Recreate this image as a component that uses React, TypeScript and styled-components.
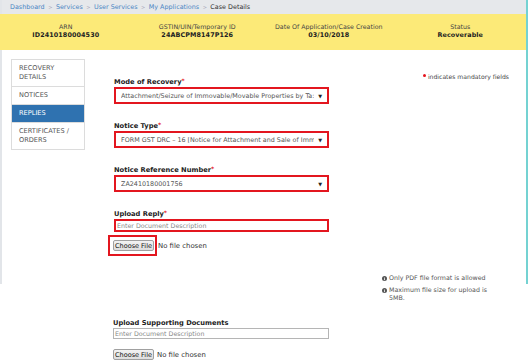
import React from "react";
import styled, { createGlobalStyle } from "styled-components";

const GlobalStyle = createGlobalStyle`
  html, body { margin: 0; padding: 0; background: #ffffff; }
  body { font-family: "DejaVu Sans", Verdana, sans-serif; color: #333; }
  * { box-sizing: border-box; }
`;

const Page = styled.div`
  width: 528px;
  height: 361px;
  overflow: hidden;
  background: #fff;
`;

const TopSection = styled.div`
  height: 284px;
  border-left: 2px solid #e2e5e9;
  border-right: 2px solid #74d2d2;
`;

const Breadcrumb = styled.nav`
  height: 14px;
  background: #e6e8eb;
  display: flex;
  align-items: center;
  padding-left: 8px;
  font-size: 6.4px;
  gap: 3.5px;
`;

const Crumb = styled.span<{ $current?: boolean }>`
  color: ${(p) => (p.$current ? "#333" : "#4a86c4")};
`;

const Sep = styled.span`
  color: #aab;
  font-size: 5px;
`;

const CaseHeader = styled.div`
  height: 36px;
  background: #fcea78;
  display: grid;
  grid-template-columns: repeat(4, 1fr);
  padding-top: 8px;
  margin-left: -2px;
`;

const HeaderCell = styled.div`
  display: flex;
  flex-direction: column;
  align-items: center;
  line-height: 9px;
`;

const HeaderLabel = styled.span`
  font-size: 6.3px;
  color: #444;
`;

const HeaderValue = styled.span`
  font-size: 6.4px;
  font-weight: bold;
  color: #222;
  letter-spacing: 0.1px;
`;

const Body = styled.div`
  display: grid;
  grid-template-columns: 74px 215px minmax(0, 1fr);
  column-gap: 29px;
  padding-left: 9px;
  align-items: start;
`;

const Sidebar = styled.ul`
  list-style: none;
  margin: 9px 0 0 0;
  padding: 0;
  border: 1px solid #dcdcdc;
`;

const SideItem = styled.li<{ $active?: boolean }>`
  padding: 4px 7px;
  font-size: 6.6px;
  line-height: 9px;
  text-transform: uppercase;
  color: ${(p) => (p.$active ? "#fff" : "#555")};
  background: ${(p) => (p.$active ? "#2f72b0" : "#fff")};
  border-top: 1px solid #dcdcdc;
  &:first-child { border-top: none; }
`;

const Form = styled.div`
  display: flex;
  flex-direction: column;
  padding-top: 27px;
  min-width: 0;
`;

const Field = styled.div`
  display: flex;
  flex-direction: column;
  margin-bottom: 17px;
`;

const Label = styled.label`
  font-size: 6.7px;
  font-weight: bold;
  color: #222;
  line-height: 10px;
  white-space: nowrap;
`;

const Req = styled.span`
  color: #e5141c;
  font-size: 6px;
  vertical-align: top;
  line-height: 8px;
`;

const SelectBox = styled.div<{ $invalid?: boolean }>`
  height: 17px;
  border: ${(p) => (p.$invalid ? "2px solid #e3161f" : "1px solid #aaa")};
  display: flex;
  align-items: center;
  justify-content: space-between;
  padding: 0 5px 0 5px;
  font-size: 6.4px;
  color: #555;
  white-space: nowrap;
  overflow: hidden;
`;

const SelectText = styled.span`
  overflow: hidden;
`;

const Arrow = styled.span`
  font-size: 5px;
  color: #222;
  margin-left: 4px;
`;

const TextInput = styled.div<{ $invalid?: boolean }>`
  height: ${(p) => (p.$invalid ? "13px" : "11px")};
  border: ${(p) => (p.$invalid ? "2px solid #e3161f" : "1px solid #b5b5b5")};
  display: flex;
  align-items: center;
  padding-left: 1px;
  font-size: 6.3px;
  color: #888;
`;

const FileRow = styled.div<{ $shift?: boolean }>`
  display: flex;
  align-items: center;
  font-size: 6.9px;
  color: #333;
  margin-top: ${(p) => (p.$shift ? "-14px" : "10px")};
  margin-left: ${(p) => (p.$shift ? "-6px" : "0")};
`;

const Highlight = styled.div`
  border: 2px solid #e3161f;
  padding: 3px 1px 3px 3px;
  display: flex;
`;

const FileButton = styled.span`
  display: inline-flex;
  align-items: center;
  justify-content: center;
  width: 41px;
  height: 11px;
  border: 1px solid #a0a0a0;
  border-radius: 2px;
  background: linear-gradient(#f3f3f3, #dddddd);
  font-size: 6.5px;
  color: #111;
`;

const NoFile = styled.span<{ $gap: number }>`
  margin-left: ${(p) => p.$gap}px;
`;

const Aside = styled.div`
  display: flex;
  flex-direction: column;
  min-width: 0;
`;

const Mandatory = styled.div`
  margin-top: 23px;
  margin-right: 17px;
  align-self: flex-end;
  font-size: 6.1px;
  color: #444;
  display: flex;
  align-items: center;
  gap: 2px;
  white-space: nowrap;
`;

const Dot = styled.span`
  width: 3px;
  height: 3px;
  border-radius: 50%;
  background: #e5141c;
  margin-top: -2px;
`;

const Notes = styled.div`
  margin-top: 194px;
  margin-left: 24px;
  width: 114px;
  display: flex;
  flex-direction: column;
  gap: 4px;
`;

const Note = styled.div`
  display: flex;
  align-items: flex-start;
  gap: 2px;
  font-size: 6.3px;
  line-height: 8px;
  color: #555;
`;

const InfoIcon = styled.svg`
  flex: none;
  width: 5px;
  height: 5px;
  margin-top: 1.5px;
`;

const BottomSection = styled.div`
  padding: 34px 0 0 113px;
  width: 329px;
  display: flex;
  flex-direction: column;
`;

const Info = () => (
  <InfoIcon viewBox="0 0 10 10">
    <circle cx="5" cy="5" r="5" fill="#555" />
    <rect x="4.2" y="4.2" width="1.6" height="4" fill="#fff" />
    <circle cx="5" cy="2.7" r="0.9" fill="#fff" />
  </InfoIcon>
);

const crumbs = ["Dashboard", "Services", "User Services", "My Applications"];

const header = [
  { label: "ARN", value: "ID2410180004530" },
  { label: "GSTIN/UIN/Temporary ID", value: "24ABCPM8147P126" },
  { label: "Date Of Application/Case Creation", value: "03/10/2018" },
  { label: "Status", value: "Recoverable" },
];

const sideItems = ["Recovery Details", "Notices", "Replies", "Certificates / Orders"];

const selects = [
  { label: "Mode of Recovery", value: "Attachment/Seizure of Immovable/Movable Properties by Ta:" },
  { label: "Notice Type", value: "FORM GST DRC – 16 [Notice for Attachment and Sale of Imm" },
  { label: "Notice Reference Number", value: "ZA2410180001756" },
];

export default function App() {
  return (
    <Page>
      <GlobalStyle />
      <TopSection>
        <Breadcrumb>
          {crumbs.map((c) => (
            <React.Fragment key={c}>
              <Crumb>{c}</Crumb>
              <Sep>&gt;</Sep>
            </React.Fragment>
          ))}
          <Crumb $current>Case Details</Crumb>
        </Breadcrumb>
        <CaseHeader>
          {header.map((h) => (
            <HeaderCell key={h.label}>
              <HeaderLabel>{h.label}</HeaderLabel>
              <HeaderValue>{h.value}</HeaderValue>
            </HeaderCell>
          ))}
        </CaseHeader>
        <Body>
          <Sidebar>
            {sideItems.map((s) => (
              <SideItem key={s} $active={s === "Replies"}>
                {s}
              </SideItem>
            ))}
          </Sidebar>
          <Form>
            {selects.map((s) => (
              <Field key={s.label}>
                <Label>
                  {s.label}
                  <Req>*</Req>
                </Label>
                <SelectBox $invalid>
                  <SelectText>{s.value}</SelectText>
                  <Arrow>▼</Arrow>
                </SelectBox>
              </Field>
            ))}
            <Field>
              <Label>
                Upload Reply<Req>*</Req>
              </Label>
              <TextInput $invalid>Enter Document Description</TextInput>
            </Field>
            <FileRow $shift>
              <Highlight>
                <FileButton>Choose File</FileButton>
              </Highlight>
              <NoFile $gap={1}>No file chosen</NoFile>
            </FileRow>
          </Form>
          <Aside>
            <Mandatory>
              <Dot />
              indicates mandatory fields
            </Mandatory>
            <Notes>
              <Note>
                <Info />
                <span>Only PDF file format is allowed</span>
              </Note>
              <Note>
                <Info />
                <span>Maximum file size for upload is 5MB.</span>
              </Note>
            </Notes>
          </Aside>
        </Body>
      </TopSection>
      <BottomSection>
        <Label>Upload Supporting Documents</Label>
        <TextInput>Enter Document Description</TextInput>
        <FileRow>
          <FileButton>Choose File</FileButton>
          <NoFile $gap={3}>No file chosen</NoFile>
        </FileRow>
      </BottomSection>
    </Page>
  );
}
